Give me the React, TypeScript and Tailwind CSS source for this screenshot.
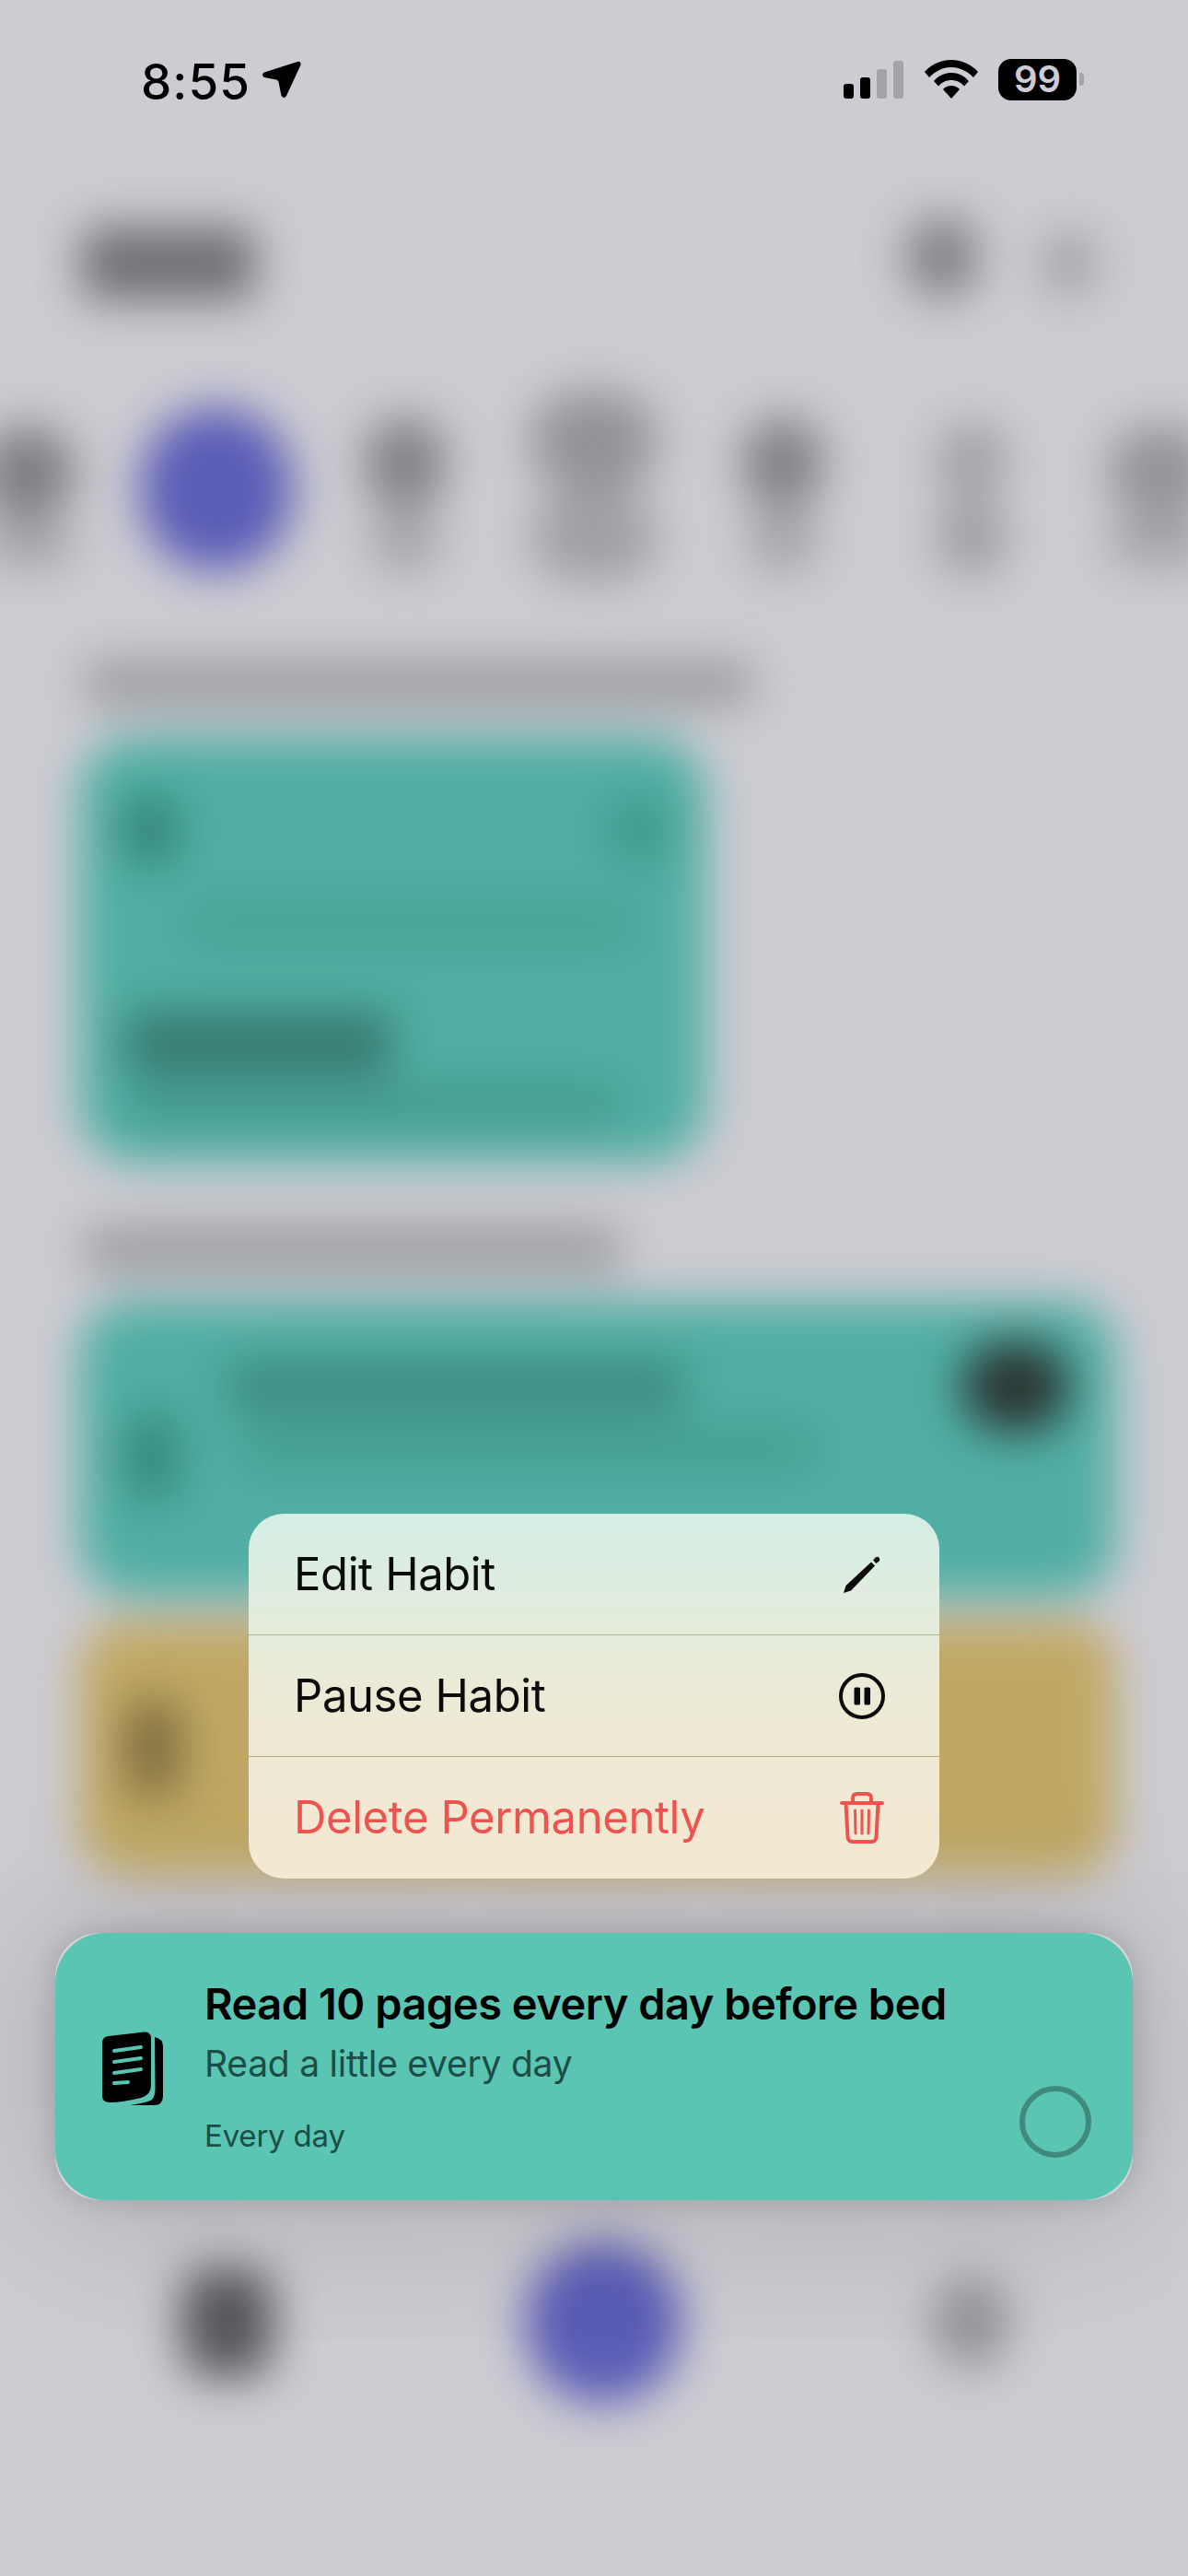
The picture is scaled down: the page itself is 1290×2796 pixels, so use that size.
import React from "react";

function Story({ top, bottom, topSize, bottomSize, offset }: { top: string; bottom: string; topSize: string; bottomSize: string; offset: string }) {
  return (
    <div className={`flex w-[205px] shrink-0 flex-col items-center ${offset}`}>
      <div className={`rounded-full ${top} ${topSize}`} />
      <div className={`rounded-full ${bottom} ${bottomSize}`} />
    </div>
  );
}

function Background() {
  return (
    <div className="absolute inset-0 overflow-hidden bg-[#cdccd2]">
      <div className="flex h-full flex-col blur-[25px]">
        <div className="ml-[88px] mr-[99px] mt-[246px] flex h-[80px] items-center justify-between">
          <div className="h-[80px] w-[190px] rounded-[14px] bg-[#6f6f73]" />
          <div className="flex items-center gap-[68px]">
            <div className="mb-[14px] h-[90px] w-[80px] rounded-full bg-[#7f7f84]" />
            <div className="h-[70px] w-[60px] rounded-full bg-[#9f9fa4]" />
          </div>
        </div>
        <div className="mt-[116px] flex h-[190px] justify-center">
          <Story offset="pt-[20px]" top="bg-[#7c7c81]" bottom="bg-[#a5a4a9]" topSize="h-[100px] w-[104px]" bottomSize="h-[54px] w-[104px]" />
          <div className="flex w-[205px] shrink-0 justify-center">
            <div className="h-[178px] w-[166px] rounded-full bg-[#5a5cb6]" />
          </div>
          <Story offset="pt-[10px]" top="bg-[#808085]" bottom="bg-[#a5a4a9]" topSize="h-[100px] w-[90px]" bottomSize="h-[70px] w-[80px]" />
          <Story offset="mt-[-18px]" top="bg-[#929297]" bottom="bg-[#a0a0a5]" topSize="h-[116px] w-[140px]" bottomSize="h-[104px] w-[140px]" />
          <Story offset="pt-[10px]" top="bg-[#808085]" bottom="bg-[#a5a4a9]" topSize="h-[100px] w-[90px]" bottomSize="h-[70px] w-[80px]" />
          <Story offset="pt-[16px]" top="bg-[#a09fa5]" bottom="bg-[#9e9da3]" topSize="h-[84px] w-[78px]" bottomSize="h-[84px] w-[78px]" />
          <Story offset="pt-[20px]" top="bg-[#929297]" bottom="bg-[#a5a4a9]" topSize="h-[96px] w-[116px]" bottomSize="h-[58px] w-[116px]" />
        </div>
        <div className="ml-[92px] mt-[86px] h-[48px] w-[725px] rounded-[8px] bg-[#98999d]" />
        <div className="ml-[86px] mt-[34px] flex h-[462px] w-[681px] flex-col rounded-[62px] bg-[#50aea4] pl-[50px] pr-[36px] pt-[66px]">
          <div className="flex items-center justify-between">
            <div className="h-[68px] w-[54px] rounded-[12px] bg-[#2f7c70]" />
            <div className="h-[70px] w-[74px] rounded-full bg-[#40978c]" />
          </div>
          <div className="ml-[60px] mt-[42px] h-[50px] w-[500px] rounded-full bg-[#48a296]" />
          <div className="mt-[70px] h-[68px] w-[290px] rounded-[10px] bg-[#37796f]" />
          <div className="mt-[14px] h-[36px] w-[540px] rounded-full bg-[#43958b]" />
        </div>
        <div className="ml-[92px] mt-[70px] h-[48px] w-[582px] rounded-[8px] bg-[#98999d]" />
        <div className="ml-[86px] mt-[32px] flex h-[321px] w-[1126px] items-center rounded-[56px] bg-[#50aea4] pl-[52px] pr-[50px]">
          <div className="mt-[16px] h-[90px] w-[54px] shrink-0 rounded-[10px] bg-[#33847a]" />
          <div className="ml-[56px] flex flex-1 flex-col self-start pt-[64px]">
            <div className="h-[58px] w-[494px] rounded-[8px] bg-[#3d8a7f]" />
            <div className="ml-[10px] mt-[18px] h-[40px] w-[630px] rounded-full bg-[#449b90]" />
          </div>
          <div className="mb-[136px] h-[98px] w-[118px] shrink-0 rounded-full bg-[#2b3633]" />
        </div>
        <div className="ml-[86px] mt-[26px] flex h-[276px] w-[1126px] items-center rounded-[50px] bg-[#c0a864] pl-[50px]">
          <div className="h-[100px] w-[60px] rounded-[12px] bg-[#7c6b3c]" />
        </div>
        <div className="mt-[403px] flex h-[165px] items-center justify-between pl-[197px] pr-[194px]">
          <div className="h-[120px] w-[100px] rounded-[32px] bg-[#57575b]" />
          <div className="h-[176px] w-[170px] rounded-full bg-[#5a5cb6]" />
          <div className="h-[100px] w-[84px] rounded-full bg-[#929297]" />
        </div>
      </div>
    </div>
  );
}

function MenuRow({ label, danger, divider, icon }: { label: string; danger?: boolean; divider: string; icon: React.ReactNode }) {
  return (
    <div className={`flex h-[132px] items-center justify-between border-b pl-[49px] pr-[59px] ${divider}`}>
      <span className={`text-[49px] leading-none tracking-[-0.4px] ${danger ? "text-[#ef5350]" : "text-[#0b0b0b]"}`}>{label}</span>
      <span className="flex w-[50px] justify-center">{icon}</span>
    </div>
  );
}

export default function App() {
  return (
    <div className="relative h-[2796px] w-[1290px] overflow-hidden font-['Inter','Liberation_Sans',sans-serif]">
      <Background />
      <div className="relative flex h-full flex-col">
        <div className="mt-[64px] flex h-[44px] items-center justify-between pl-[153px] pr-[113px]">
          <div className="flex items-center gap-[12px]">
            <span className="mt-[6px] text-[53px] font-medium leading-none tracking-[1px] text-black">8:55</span>
            <svg className="mt-[1px]" width="44" height="42" viewBox="0 0 44 42" fill="black">
              <path d="M39 1 Q43 0 42.5 4.5 L27 38 Q24.5 42 21.5 38 L18.5 23 Q18 21 16 20.5 L3 18 Q-1 15 3 12.5 Z" />
            </svg>
          </div>
          <div className="flex items-center">
            <div className="flex items-end gap-[7px]">
              <div className="h-[16px] w-[11px] rounded-[3px] bg-black" />
              <div className="h-[23px] w-[11px] rounded-[3px] bg-black" />
              <div className="h-[32px] w-[11px] rounded-[3px] bg-[#a4a3a8]" />
              <div className="h-[41px] w-[11px] rounded-[3px] bg-[#a4a3a8]" />
            </div>
            <svg className="ml-[23px]" width="58" height="42" viewBox="0 0 58 42" fill="black">
              <path d="M29 0 C39 0 50 4 58 13 L53 19 C46 12 38 8 29 8 C20 8 12 12 5 19 L0 13 C8 4 19 0 29 0 Z" />
              <path d="M29 14 C36 14 43 17 48 23 L43 28.5 C39 24 34 22 29 22 C24 22 19 24 15 28.5 L10 23 C15 17 22 14 29 14 Z" />
              <path d="M29 28 C32.5 28 35.5 29.5 38 32 L29 42 L20 32 C22.5 29.5 25.5 28 29 28 Z" />
            </svg>
            <div className="ml-[22px] flex h-[45px] w-[85px] items-center justify-center rounded-[14px] bg-black">
              <span className="text-[40px] font-semibold leading-none text-[#cdccd2]">99</span>
            </div>
            <div className="ml-[3px] h-[14px] w-[5px] rounded-r-[4px] bg-[#a4a3a8]" />
          </div>
        </div>

        <div className="relative ml-[270px] mt-[1535px] w-[750px] overflow-hidden rounded-[38px] bg-gradient-to-b from-[#d5eee5] via-[#ecead6] to-[#f4e8d1]">
          <MenuRow
            label="Edit Habit"
            divider="border-[#aeb092]"
            icon={
              <svg width="40" height="40" viewBox="0 0 40 40" fill="#0b0b0b">
                <path d="M0 40 L2.5 32 L30 6.5 L34 10.5 L8 37.5 Z" />
                <path d="M32 4.5 L34.5 1.5 Q36.5 0 38.5 1.5 Q40 3.5 38.5 5.5 L35.5 8 Z" />
              </svg>
            }
          />
          <MenuRow
            label="Pause Habit"
            divider="border-[#b5ab82]"
            icon={
              <svg width="50" height="50" viewBox="0 0 50 50" fill="none">
                <circle cx="25" cy="25" r="23" stroke="#0b0b0b" strokeWidth="4" />
                <rect x="16.5" y="15.5" width="6.5" height="19" rx="1.5" fill="#0b0b0b" />
                <rect x="27.5" y="15.5" width="6.5" height="19" rx="1.5" fill="#0b0b0b" />
              </svg>
            }
          />
          <MenuRow
            label="Delete Permanently"
            danger
            divider="border-transparent"
            icon={
              <svg width="48" height="56" viewBox="0 0 48 56" fill="none" stroke="#ef5350" strokeWidth="4" strokeLinecap="round" strokeLinejoin="round">
                <path d="M2 12 H46" />
                <path d="M14 12 V7 Q14 2 19 2 H29 Q34 2 34 7 V12" />
                <path d="M6.5 12 L8.5 49 Q9 54 14 54 H34 Q39 54 39.5 49 L41.5 12" />
                <path d="M16.5 20 L17 45 M24 20 V45 M31.5 20 L31 45" strokeWidth="3" />
              </svg>
            }
          />
        </div>

        <div className="mx-[60px] mt-[59px] h-[290px] rounded-[48px] bg-[#d5d5d8] shadow-[0_0_30px_rgba(0,0,0,0.16),0_0_180px_rgba(0,0,0,0.2)]">
          <div className="flex h-full items-start rounded-[54px] bg-[#5ac5b2] pl-[51px] pr-[45px]">
            <svg className="mt-[107px] shrink-0" width="66" height="80" viewBox="0 0 66 80" fill="black">
              <path d="M7 5 L46 0.5 Q53 0 53 8 V58 Q53 69 42 72 Q22 77 8 77 Q0 77 0 70 V12 Q0 6 7 5 Z" />
              <path d="M57 6 Q66 8 66 16 V70 Q66 80 56 80 H30 Q50 77 54 74 Q57.5 70 57.5 62 Z" />
              <path d="M13 21 L42 17 M13 33 L42 29 M13 45 L42 41 M13 56 L28 55" stroke="#5ac5b2" strokeWidth="4" strokeLinecap="round" fill="none" />
            </svg>
            <div className="ml-[45px] flex min-w-0 flex-1 flex-col pt-[49px]">
              <span className="whitespace-nowrap text-[47px] font-semibold leading-[56px] tracking-[-0.5px] text-black">Read 10 pages every day before bed</span>
              <span className="mt-[14px] text-[39px] leading-[46px] tracking-[-0.25px] text-[#1c4d47]">Read a little every day</span>
              <div className="mt-[35px] flex items-start justify-between">
                <span className="text-[33px] leading-[40px] tracking-[-0.2px] text-[#1c4d47]">Every day</span>
                <div className="mt-[-34px] h-[78px] w-[78px] rounded-full border-[6px] border-[#3f8a7c]" />
              </div>
            </div>
          </div>
        </div>
      </div>
    </div>
  );
}
